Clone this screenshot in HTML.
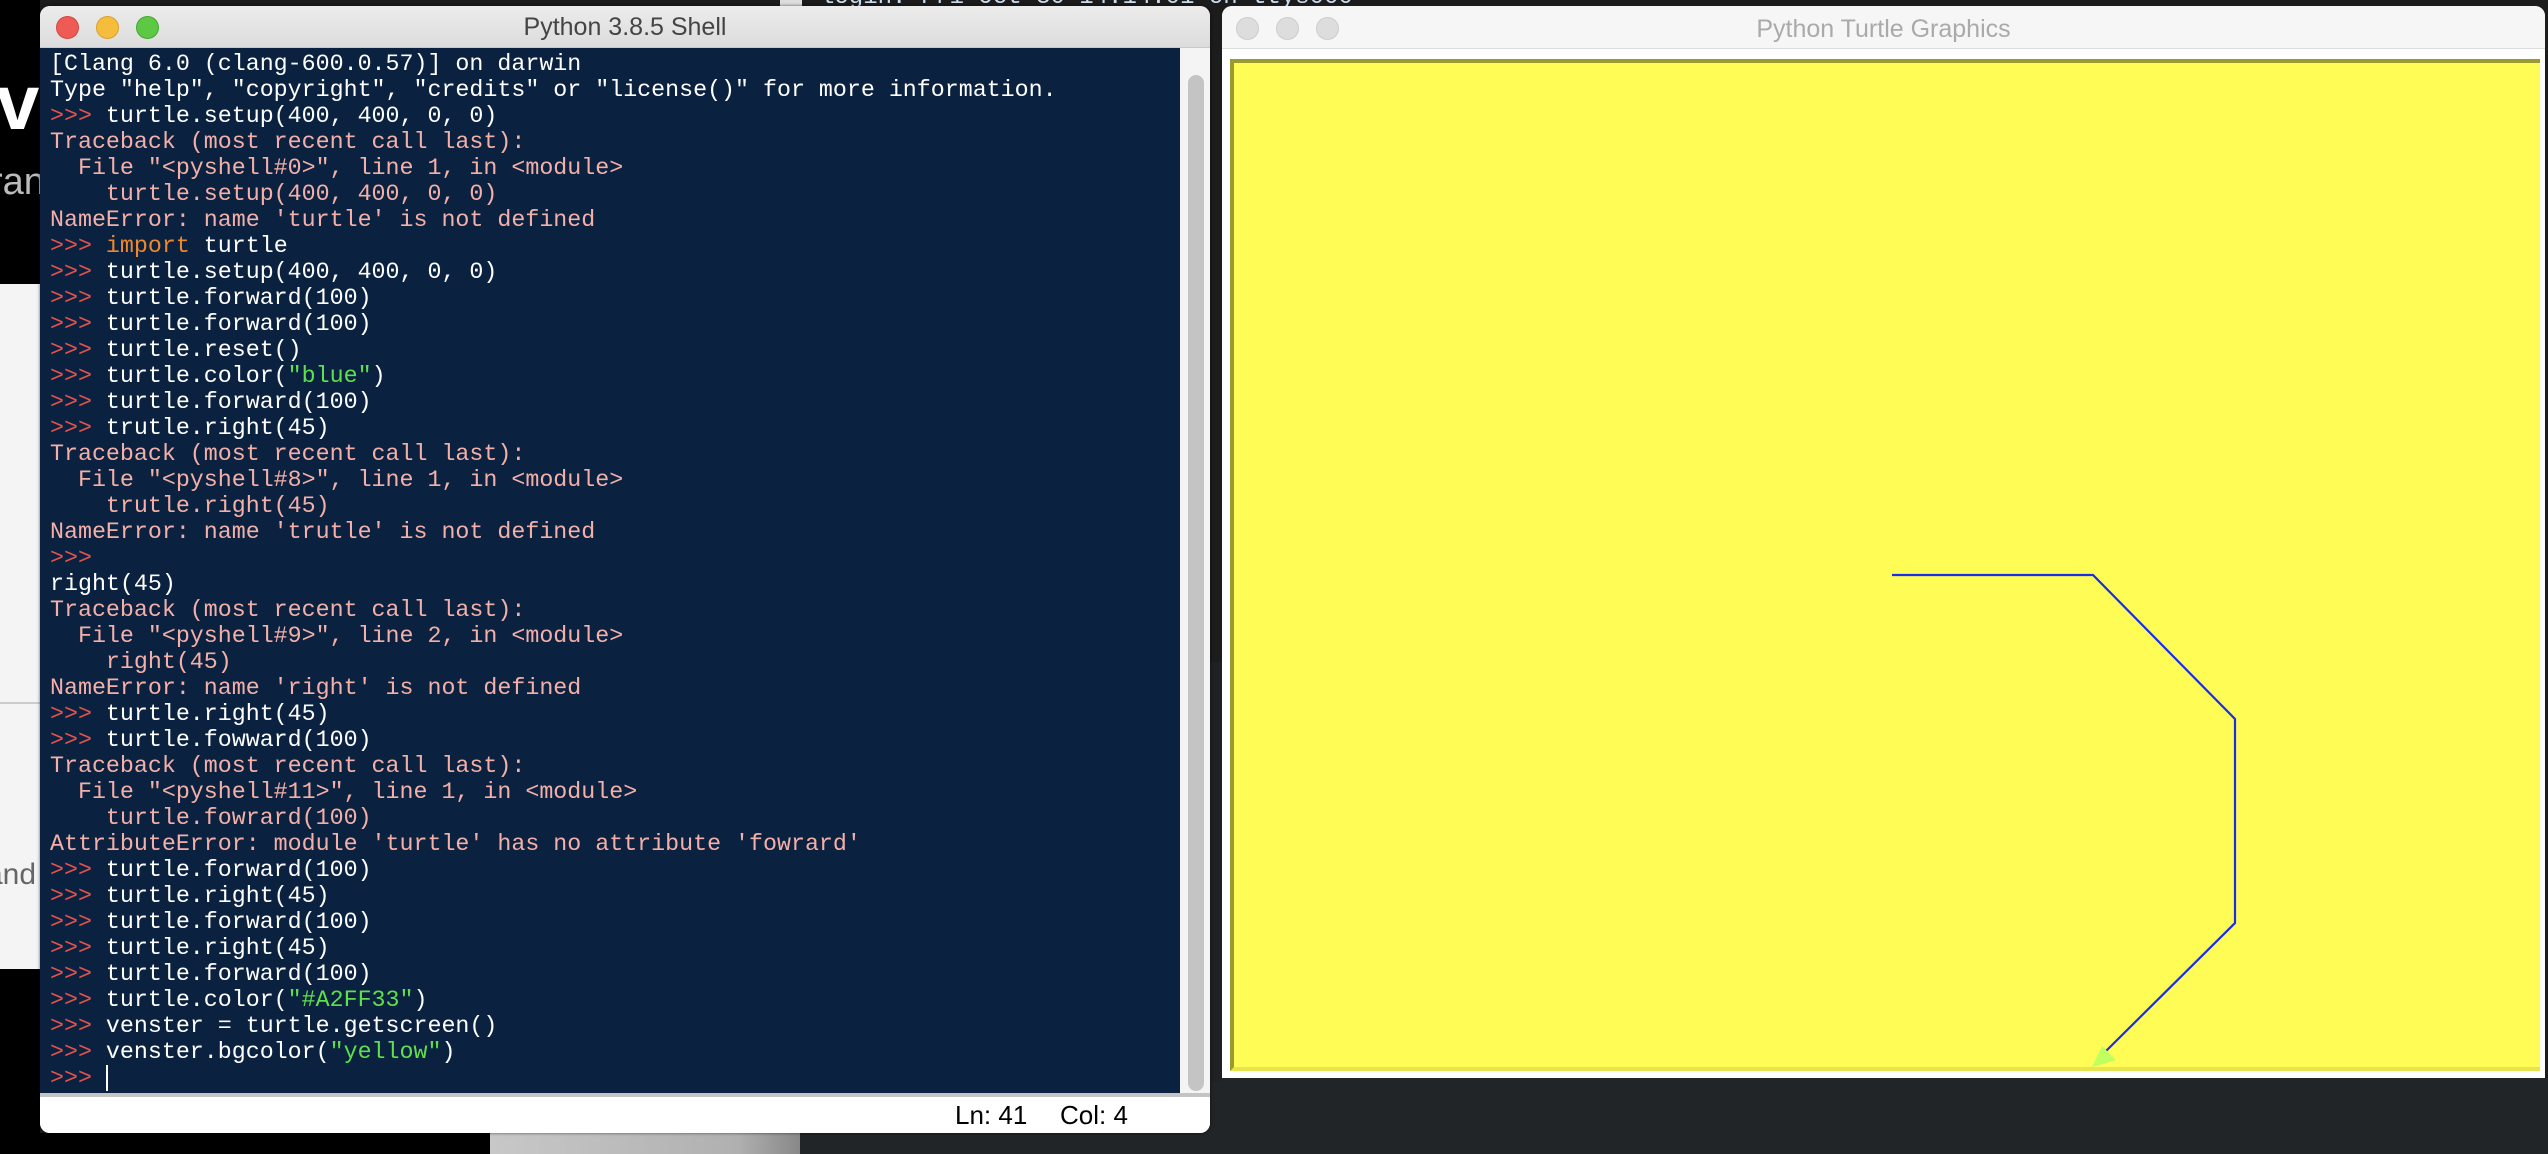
<!DOCTYPE html>
<html><head><meta charset="utf-8"><style>
*{margin:0;padding:0;box-sizing:border-box}
html,body{width:2548px;height:1154px;overflow:hidden;background:#1c1c1c;position:relative;font-family:"Liberation Sans",sans-serif}
.abs{position:absolute}
#shell{left:40px;top:6px;width:1170px;height:1127px;background:#fff;border-radius:10px;overflow:hidden;box-shadow:0 0 3px rgba(0,0,0,.6)}
#shell .tb{left:0;top:0;width:100%;height:42px;background:linear-gradient(#ececec,#dcdcdc);border-bottom:1px solid #c8c8c8}
.tl{position:absolute;top:10px;width:23px;height:23px;border-radius:50%}
.ttl{position:absolute;top:0;left:0;width:100%;text-align:center;line-height:44px;font-size:25px}
#code{left:0;top:42px;width:1140px;height:1045px;background:#0a2240;font-family:"Liberation Mono",monospace;font-size:23.3px;line-height:26px;color:#fff;padding:3px 0 0 10px;white-space:pre}
.p{color:#e8524a}.o{color:#f4b0a8}.k{color:#f0882a}.s{color:#5fe04a}
#sb{left:1140px;top:42px;width:30px;height:1045px;background:#f4f4f4}
#thumb{left:1148px;top:69px;width:16px;height:1016px;background:#c4c4c4;border-radius:8px}
#status{left:0;top:1087px;width:100%;height:40px;background:#fff;border-top:4px solid #c4c4c4;font-size:26px;line-height:36px}
#tw{left:1222px;top:6px;width:1323px;height:1072px;background:#fff;border-radius:10px 10px 0 0;overflow:hidden}
#tw .tb{left:0;top:0;width:100%;height:43px;background:#f6f6f6;border-bottom:1px solid #ddd}
#canvas{left:8px;top:53px;width:1310px;height:1012px;background:#fffc55;border-top:4px solid #9a9a30;border-left:4px solid #9a9a30;border-bottom:4px solid #e8e450}
</style></head><body>
<div class="abs" style="left:0;top:0;width:40px;height:284px;background:#000"></div>
<div class="abs" style="left:-4px;top:62px;color:#fff;font-size:78px;font-weight:bold;line-height:80px">v</div>
<div class="abs" style="left:-10px;top:162px;color:#bbb;font-size:38px;line-height:40px">ran</div>
<div class="abs" style="left:0;top:284px;width:40px;height:685px;background:#f4f4f4"></div>
<div class="abs" style="left:0;top:702px;width:40px;height:2px;background:#ccc"></div>
<div class="abs" style="left:-14px;top:858px;color:#666;font-size:30px">and</div>
<div class="abs" style="left:0;top:969px;width:40px;height:185px;background:#000"></div>
<div class="abs" style="left:0;top:1133px;width:490px;height:21px;background:#000"></div>
<div class="abs" style="left:490px;top:1133px;width:310px;height:21px;background:linear-gradient(90deg,#c8c8c8,#b0b0b0 80%,#888)"></div>
<div class="abs" style="left:800px;top:1078px;width:1748px;height:76px;background:#212527"></div>
<div class="abs" style="left:1210px;top:662px;width:12px;height:420px;background:#1e2224"></div>
<div class="abs" style="left:780px;top:0;width:22px;height:6px;background:#ddd"></div>
<div class="abs" style="left:820px;top:-16px;color:#cde;font-family:'Liberation Mono',monospace;font-size:24px;white-space:pre">login: Fri Oct 30 14:14:01 on ttys000</div>

<div id="shell" class="abs">
 <div class="tb abs">
  <div class="tl" style="left:16px;background:#ee5b55;border:1px solid #d8443e"></div>
  <div class="tl" style="left:56px;background:#f5bd3b;border:1px solid #dca02a"></div>
  <div class="tl" style="left:96px;background:#5cc844;border:1px solid #44a82e"></div>
  <div class="ttl" style="color:#444;line-height:42px">Python 3.8.5 Shell</div>
 </div>
 <div id="code" class="abs">[Clang 6.0 (clang-600.0.57)] on darwin
Type "help", "copyright", "credits" or "license()" for more information.
<span class="p">&gt;&gt;&gt; </span>turtle.setup(400, 400, 0, 0)
<span class="o">Traceback (most recent call last):
  File "&lt;pyshell#0&gt;", line 1, in &lt;module&gt;
    turtle.setup(400, 400, 0, 0)
NameError: name 'turtle' is not defined</span>
<span class="p">&gt;&gt;&gt; </span><span class="k">import</span> turtle
<span class="p">&gt;&gt;&gt; </span>turtle.setup(400, 400, 0, 0)
<span class="p">&gt;&gt;&gt; </span>turtle.forward(100)
<span class="p">&gt;&gt;&gt; </span>turtle.forward(100)
<span class="p">&gt;&gt;&gt; </span>turtle.reset()
<span class="p">&gt;&gt;&gt; </span>turtle.color(<span class="s">"blue"</span>)
<span class="p">&gt;&gt;&gt; </span>turtle.forward(100)
<span class="p">&gt;&gt;&gt; </span>trutle.right(45)
<span class="o">Traceback (most recent call last):
  File "&lt;pyshell#8&gt;", line 1, in &lt;module&gt;
    trutle.right(45)
NameError: name 'trutle' is not defined</span>
<span class="p">&gt;&gt;&gt; </span>
right(45)
<span class="o">Traceback (most recent call last):
  File "&lt;pyshell#9&gt;", line 2, in &lt;module&gt;
    right(45)
NameError: name 'right' is not defined</span>
<span class="p">&gt;&gt;&gt; </span>turtle.right(45)
<span class="p">&gt;&gt;&gt; </span>turtle.fowward(100)
<span class="o">Traceback (most recent call last):
  File "&lt;pyshell#11&gt;", line 1, in &lt;module&gt;
    turtle.fowrard(100)
AttributeError: module 'turtle' has no attribute 'fowrard'</span>
<span class="p">&gt;&gt;&gt; </span>turtle.forward(100)
<span class="p">&gt;&gt;&gt; </span>turtle.right(45)
<span class="p">&gt;&gt;&gt; </span>turtle.forward(100)
<span class="p">&gt;&gt;&gt; </span>turtle.right(45)
<span class="p">&gt;&gt;&gt; </span>turtle.forward(100)
<span class="p">&gt;&gt;&gt; </span>turtle.color(<span class="s">"#A2FF33"</span>)
<span class="p">&gt;&gt;&gt; </span>venster = turtle.getscreen()
<span class="p">&gt;&gt;&gt; </span>venster.bgcolor(<span class="s">"yellow"</span>)
<span class="p">&gt;&gt;&gt; </span><span style="display:inline-block;width:2px;height:26px;background:#fff;vertical-align:top"></span></div>
 <div id="sb" class="abs"></div>
 <div id="thumb" class="abs"></div>
 <div id="status" class="abs"><span class="abs" style="left:915px;top:0">Ln: 41</span><span class="abs" style="left:1020px;top:0">Col: 4</span></div>
</div>

<div id="tw" class="abs">
 <div class="tb abs">
  <div class="tl" style="left:14px;top:11px;background:#ddd;border:1px solid #ccc"></div>
  <div class="tl" style="left:54px;top:11px;background:#ddd;border:1px solid #ccc"></div>
  <div class="tl" style="left:94px;top:11px;background:#ddd;border:1px solid #ccc"></div>
  <div class="ttl" style="color:#aaa;line-height:46px">Python Turtle Graphics</div>
 </div>
 <div id="canvas" class="abs"></div>
</div>
<svg class="abs" style="left:0;top:0" width="2548" height="1154">
 <polyline points="1892,575 2093,575 2235,719 2235,923 2104,1053" fill="none" stroke="#1a2cf0" stroke-width="2.2"/>
 <polygon points="2092,1067 2116,1060 2102,1046" fill="#c0ff60"/>
</svg>
</body></html>
